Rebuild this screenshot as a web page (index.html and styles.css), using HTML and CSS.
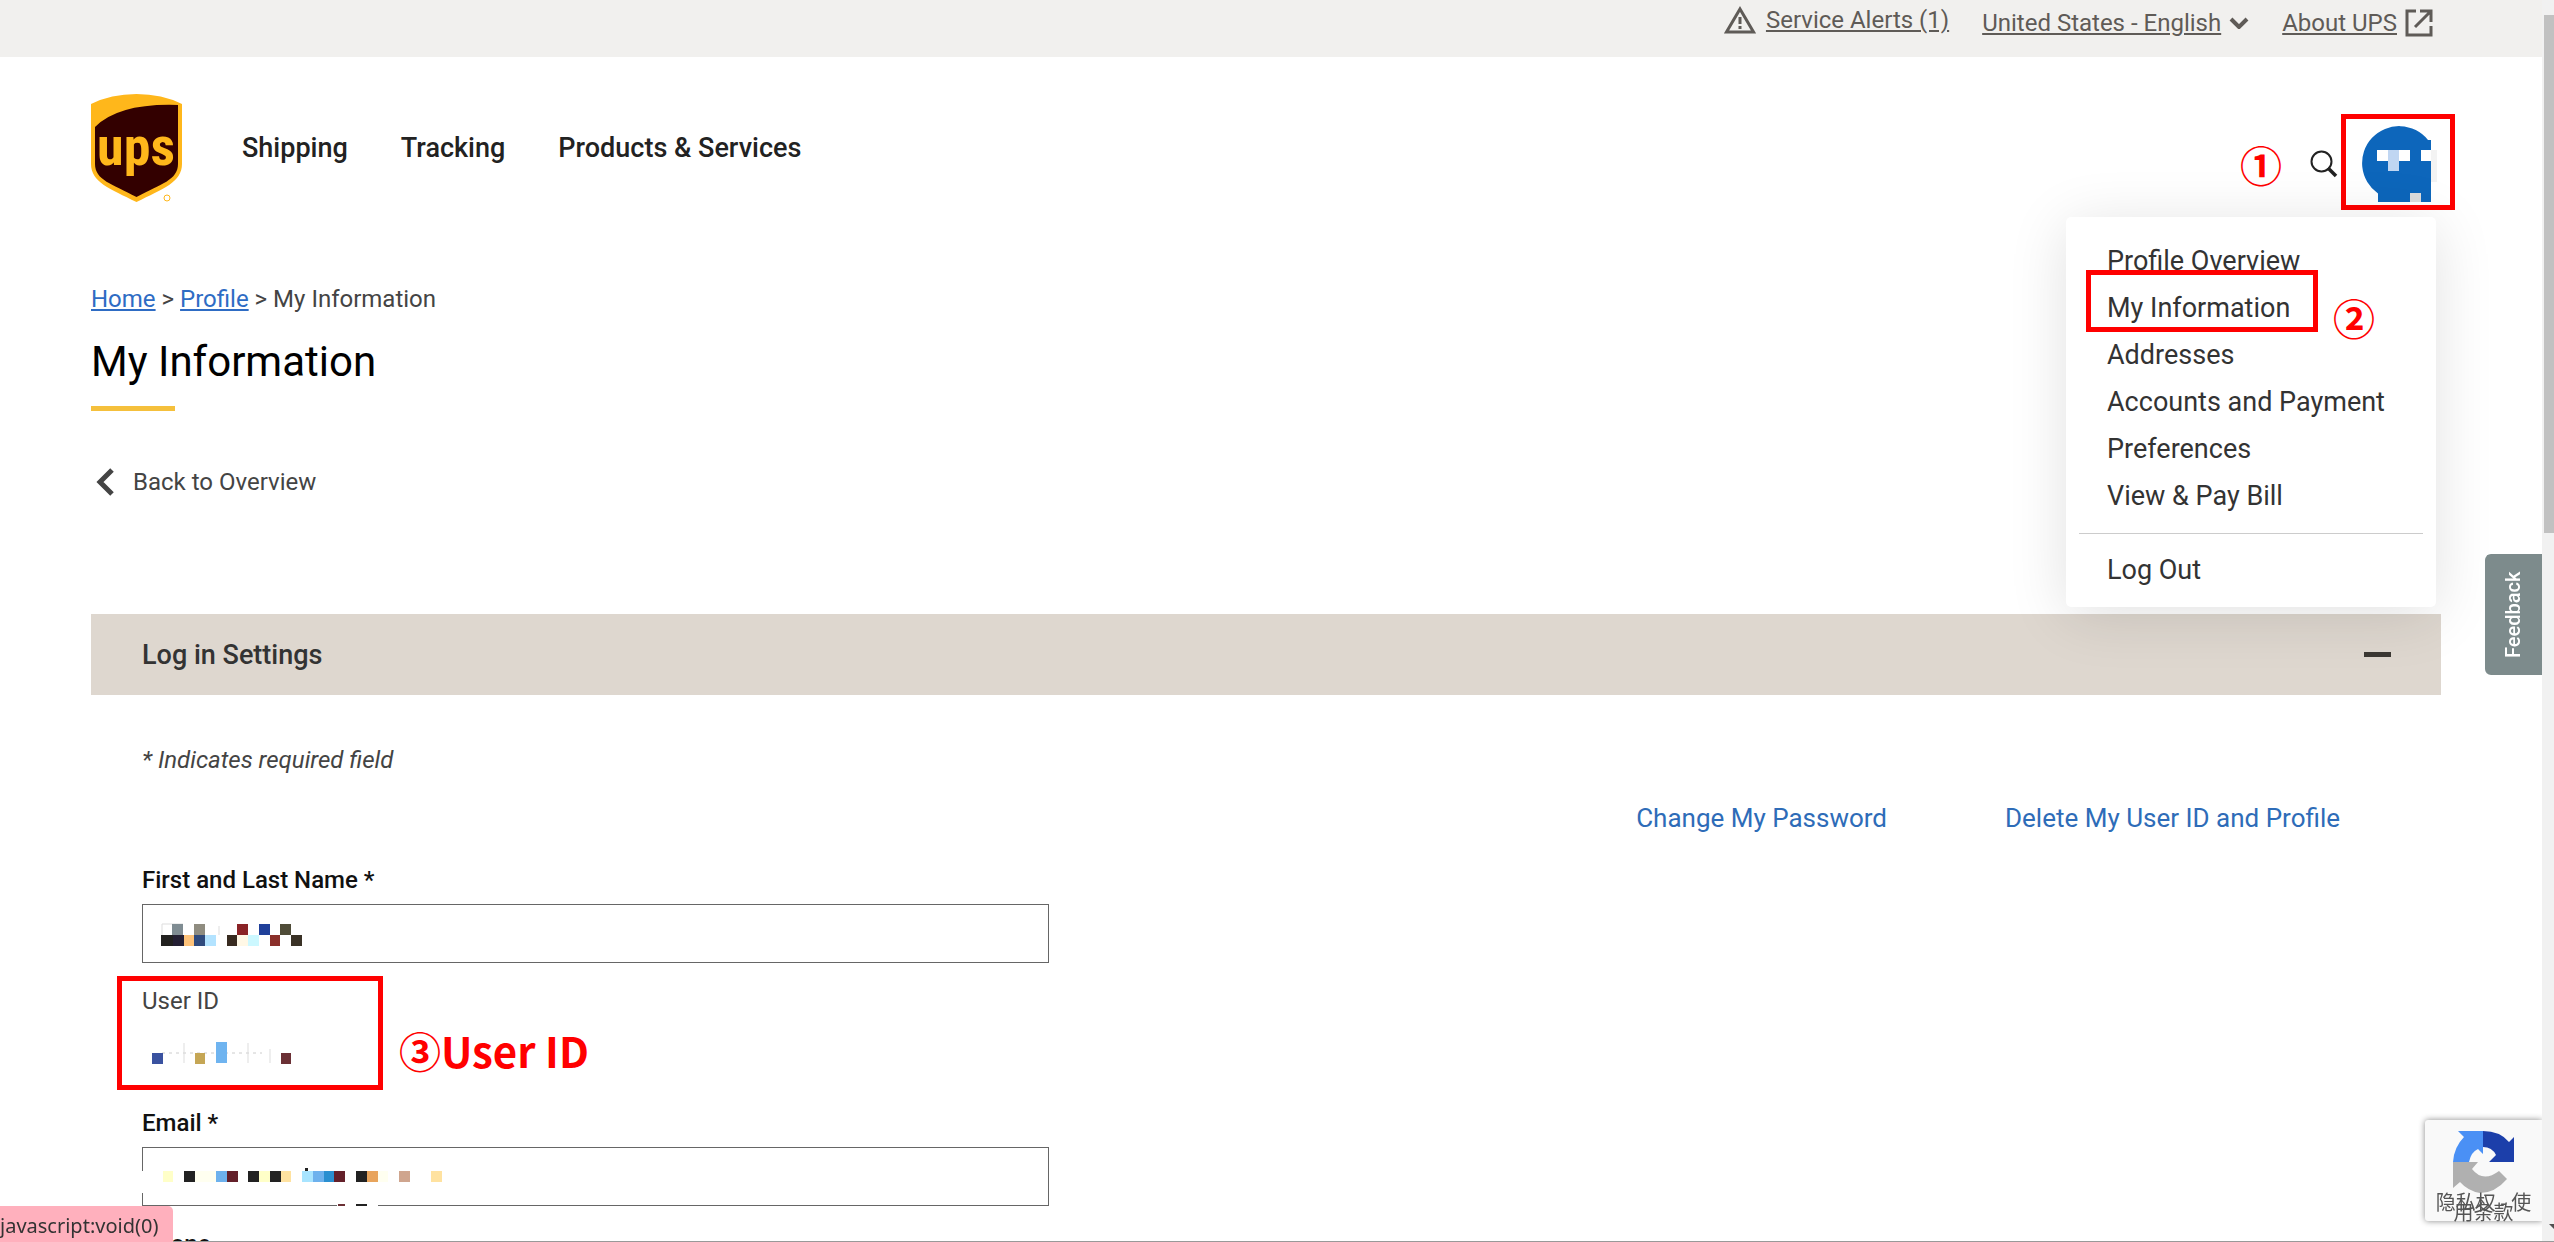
FILE: index.html
```
<!DOCTYPE html>
<html lang="en">
<head>
    <meta charset="UTF-8">
    <meta name="viewport" content="width=device-width, initial-scale=1.0">
    <title>My Information | UPS - United States</title>
    <link rel="stylesheet" href="styles.css">
</head>
<body>
    <div class="page">
        <div class="topbar">
            <a href="#" class="alerts">
                <svg width="32" height="28" viewBox="0 0 32 28"><path d="M16 3L29.500 26H2.500Z" fill="none" stroke="#5f5b57" stroke-width="3"/><path d="M16 11V18M16 20V23" stroke="#5f5b57" stroke-width="3"/></svg>
                <span>Service Alerts (1)</span>
            </a>
            <a href="#" class="country">
                <span>United States - English</span>
                <svg width="20" height="12" viewBox="0 0 20 12"><path d="M2 2L10 10L18 2" fill="none" stroke="#5f5b57" stroke-width="4"/></svg>
            </a>
            <a href="#" class="about">
                <span>About UPS</span>
                <svg width="28" height="28" viewBox="0 0 28 28"><path d="M11 2H2V26H26V17M15 2H26V13M26 2L10 18" fill="none" stroke="#5f5b57" stroke-width="3"/></svg>
            </a>
        </div>

        <header class="header">
            <a href="#" class="logo" aria-label="UPS">
                <svg width="91" height="108" viewBox="0 0 91 108">
                    <path d="M0 10Q20 0 45.500 0T91 10V70C91 88 72 95 45.500 108C19 95 0 88 0 70Z" fill="#ffb71b"/>
                    <path d="M4 33Q28 9 87 11V70C87 86 70 90 45.500 103C21 90 4 86 4 70Z" fill="#330000"/>
                    <text x="45" y="71" text-anchor="middle" class="logo-text">ups</text>
                    <circle cx="76" cy="104" r="3" fill="none" stroke="#ffb71b"/>
                </svg>
            </a>
            <nav class="nav">
                <a href="#">Shipping</a>
                <a href="#">Tracking</a>
                <a href="#">Products &amp; Services</a>
            </nav>
            <div class="tools">
                <span class="mark">①</span>
                <button class="search" aria-label="Search">
                    <svg width="28" height="28" viewBox="0 0 28 28"><circle cx="11.500" cy="11.500" r="10" fill="none" stroke="#222" stroke-width="2"/><path d="M18 18L26 26" stroke="#222" stroke-width="3.500"/></svg>
                </button>
                <button class="avatar" aria-label="Profile">
                    <svg width="75" height="76" viewBox="0 0 75 76">
                        <path d="M69 24H75V56H69Z" fill="#f3f3f3"/>
                        <path d="M69 14H66A37 37 0 1 0 16 67.500V76H69Z" fill="#0d66bb"/>
                        <path d="M15 24H26V35H15ZM37 24H48V35H37ZM59 24H69V35H59Z" fill="#fff"/>
                        <path d="M26 24H37V45H26Z" fill="#c0d6f2"/>
                        <path d="M48 67H59V76H48Z" fill="#dcdcdc"/>
                    </svg>
                    <span class="frame"></span>
                </button>
                <!-- profile menu -->
                <ul class="menu">
                    <li><a href="#">Profile Overview</a></li>
                    <li class="on"><a href="#">My Information</a><span class="frame"></span><span class="mark">②</span></li>
                    <li><a href="#">Addresses</a></li>
                    <li><a href="#">Accounts and Payment</a></li>
                    <li><a href="#">Preferences</a></li>
                    <li><a href="#">View &amp; Pay Bill</a></li>
                    <li class="logout"><a href="#">Log Out</a></li>
                </ul>
            </div>
        </header>

        <main class="content">
            <div class="breadcrumb"><a href="#">Home</a> &gt; <a href="#">Profile</a> &gt; My Information</div>
            <h1>My Information</h1>
            <a href="#" class="back">
                <svg width="28" height="28" viewBox="0 0 28 28"><path d="M21 2L9 14L21 26" fill="none" stroke="#444" stroke-width="5"/></svg>
                Back to Overview
            </a>

            <section>
                <div class="section-title">
                    <h2>Log in Settings</h2>
                    <button class="fold" aria-label="Collapse"><span></span></button>
                </div>
                <div class="section-body">
                    <p class="required">* Indicates required field</p>
                    <div class="links">
                        <a href="#">Change My Password</a>
                        <a href="#">Delete My User ID and Profile</a>
                    </div>
                    <form class="form">
                        <div class="field">
                            <label for="name">First and Last Name *</label>
                            <div class="box">
                                <input type="text" id="name">
                                <svg class="blur" width="400" height="59" viewBox="0 0 400 59">
                                    <path d="M20 31V20H41M77 31V22" fill="none" stroke="#ddd"/>
                                    <path d="M30 20h11v11h-11z" fill="#7f8c92"/><path d="M52 20h11v11h-11z" fill="#8f8c80"/>
                                    <path d="M95 20h11v11h-11z" fill="#8a2326"/><path d="M117 20h11v11h-11z" fill="#20409a"/><path d="M138 20h11v11h-11z" fill="#4f4c38"/>
                                    <path d="M19 31h12v11h-12z" fill="#22211f"/><path d="M31 31h11v11h-11z" fill="#241f33"/><path d="M42 31h10v11h-10z" fill="#fdc27a"/>
                                    <path d="M52 31h11v11h-11z" fill="#2f4a7d"/><path d="M63 31h11v11h-11z" fill="#b3e3ff"/><path d="M85 31h10v11h-10z" fill="#382b20"/>
                                    <path d="M95 31h11v11h-11z" fill="#fff8e6"/><path d="M106 31h11v11h-11z" fill="#ccf8ff"/><path d="M128 31h10v11h-10z" fill="#8a2f2a"/><path d="M149 31h11v11h-11z" fill="#3a3226"/>
                                </svg>
                            </div>
                        </div>
                        <div class="field user">
                            <span>User ID</span>
                            <svg width="160" height="24" viewBox="0 0 160 24">
                                <path d="M20 12H120" stroke="#ccc" stroke-dasharray="3 4"/><path d="M42 2V22M106 2V22M128 8V22" stroke="#ddd"/>
                                <path d="M10 12h11v11h-11z" fill="#3a52a0"/><path d="M53 12h10v11h-10z" fill="#c5a655"/><path d="M74 1h11v21h-11z" fill="#6fb4f0"/><path d="M139 12h10v11h-10z" fill="#6b3035"/>
                            </svg>
                            <span class="frame"></span>
                            <strong class="mark">③User ID</strong>
                        </div>
                        <div class="field">
                            <label for="email">Email *</label>
                            <div class="box">
                                <input type="email" id="email">
                                <svg class="blur" width="400" height="59" viewBox="0 0 400 59">
                                    <path d="M0 24h3v22h-3zM195 57h41v2h-41z" fill="#fff"/>
                                    <path d="M196 57h7v2h-7z" fill="#6b3035"/><path d="M214 57h11v2h-11z" fill="#222"/>
                                    <path d="M21 24h10v11h-10zM117 24h11v11h-11z" fill="#ffffc8"/>
                                    <path d="M42 24h11v11h-11zM106 24h11v11h-11zM128 24h11v11h-11zM214 24h11v11h-11zM163 21h3v3h-3z" fill="#222"/>
                                    <path d="M53 24h21v11h-21zM236 24h10v11h-10z" fill="#fffff0"/>
                                    <path d="M74 24h11v11h-11zM171 24h11v11h-11z" fill="#6db1ed"/>
                                    <path d="M85 24h11v11h-11zM192 24h11v11h-11z" fill="#64202a"/>
                                    <path d="M139 24h10v11h-10zM289 24h11v11h-11z" fill="#ffe2a0"/>
                                    <path d="M160 24h11v11h-11z" fill="#a8e4ff"/><path d="M182 24h10v11h-10z" fill="#2a8fd0"/>
                                    <path d="M225 24h11v11h-11z" fill="#e8a45c"/><path d="M257 24h11v11h-11z" fill="#cfa58e"/>
                                </svg>
                            </div>
                        </div>
                        <div class="field">
                            <label for="phone">Phone</label>
                            <div class="box"><input type="tel" id="phone"></div>
                        </div>
                    </form>
                </div>
            </section>
        </main>
    </div>

    <button class="feedback">Feedback</button>
    <div class="captcha">
        <svg width="62" height="62" viewBox="0 0 62 62">
            <path d="M5 0H30V23L25 18Q18 21 16 31H0Q1 16 11 6Z" fill="#4a90f5"/>
            <path d="M30 0Q47 0 56 11L61 6V31H36L43 24Q39 16 30 16Z" fill="#1c3faa"/>
            <path d="M0 31H25L19 38Q30 52 46 40L54 48Q42 62 27 62Q15 60 7 51L0 57Z" fill="#b0b0b0"/>
        </svg>
        <div>隐私权 - 使<br>用条款</div>
    </div>
    <div class="status">javascript:void(0)</div>
    <div class="scrollbar"><span></span></div>
</body>
</html>
```

FILE: styles.css
```
* { margin: 0; padding: 0; box-sizing: border-box; }
li { list-style: none; }
a { color: inherit; text-decoration: none; }
button { border: 0; background: none; font-family: inherit; }
svg { display: block; }
body, html {
    width: 100%;
    height: 100%;
    overflow: hidden;
}
body {
    font-family: Roboto, "Noto Sans CJK SC", sans-serif;
    font-size: 24px;
    line-height: 32px;
    color: #444;
    background: #fff;
    border-bottom: 1px solid #999;
}
.page {
    margin-right: 12px;
}

/* top bar */
.topbar {
    display: flex;
    justify-content: flex-end;
    align-items: flex-start;
    gap: 33px;
    height: 57px;
    padding: 7px 109px 0 91px;
    background: #f1f0ee;
    color: #5f5b57;
}
.topbar a {
    display: flex;
    align-items: center;
    gap: 8px;
}
.topbar span {
    text-decoration: underline;
}
.topbar .alerts {
    height: 26px;
    gap: 10px;
}

/* header */
.header {
    display: flex;
    align-items: center;
    height: 145px;
    padding: 37px 105px 0 91px;
}
.logo-text {
    font: bold 54px "Liberation Sans Narrow", "Roboto Condensed", Roboto, sans-serif;
    fill: #ffb71b;
}
.nav {
    display: flex;
    gap: 53px;
    margin-left: 60px;
    font-size: 27px;
    font-weight: 500;
    color: #222;
}
.tools {
    position: relative;
    display: flex;
    align-items: center;
    align-self: flex-end;
    margin-left: auto;
}
.search {
    margin: 0 24px 0 28px;
}
.avatar {
    position: relative;
}
.frame {
    position: absolute;
    border: 5px solid #f00;
}
.avatar .frame {
    left: -21px;
    top: -12px;
    width: 114px;
    height: 96px;
}
.mark {
    font-family: "Noto Sans CJK SC", sans-serif;
    font-size: 42px;
    font-weight: bold;
    color: #f00;
}
.menu {
    position: absolute;
    top: 91px;
    right: 1px;
    width: 370px;
    padding: 21px 13px 13px;
    border-radius: 5px;
    background: #fff;
    box-shadow: 0 8px 60px rgba(0, 0, 0, 0.12);
    font-size: 27px;
    line-height: 47px;
    color: #333;
}
.menu a {
    display: block;
    padding-left: 28px;
}
.menu .on {
    position: relative;
}
.menu .frame {
    left: 7px;
    top: -15px;
    width: 232px;
    height: 62px;
}
.menu .mark {
    position: absolute;
    left: 254px;
    top: 8px;
}
.menu .logout {
    margin-top: 13px;
    padding-top: 13px;
    border-top: 1px solid #ccc;
}

/* content */
.content {
    padding: 81px 101px 0 91px;
}
.breadcrumb a {
    color: #2e6cc4;
    text-decoration: underline;
}
h1 {
    margin-top: 21px;
    font-size: 42px;
    font-weight: normal;
    line-height: 52px;
    color: #000;
}
h1::after {
    content: "";
    display: block;
    width: 84px;
    height: 5px;
    margin-top: 18px;
    background: #f5c03c;
}
.back {
    display: flex;
    align-items: center;
    gap: 14px;
    margin: 55px 0 116px;
}
.section-title {
    display: flex;
    align-items: center;
    justify-content: space-between;
    height: 81px;
    padding: 0 50px 0 51px;
    background: #ded7cf;
}
h2 {
    font-size: 27px;
    font-weight: 500;
    color: #333;
}
.fold span {
    display: block;
    width: 27px;
    height: 5px;
    background: #3b3833;
}
.section-body {
    padding: 49px 101px 0 51px;
}
.required {
    font-style: italic;
}
.links {
    display: flex;
    justify-content: flex-end;
    gap: 118px;
    margin: 26px 0 30px;
    font-size: 26px;
    color: #2e6cb8;
}
.form {
    display: flex;
    flex-direction: column;
    gap: 22px;
    width: 907px;
    max-width: 100%;
}
label {
    display: block;
    margin-bottom: 8px;
    font-weight: 500;
    color: #111;
}
.box {
    position: relative;
}
.box input {
    display: block;
    width: 100%;
    height: 59px;
    padding: 0 18px;
    border: 1px solid #666;
    font-size: 24px;
}
/* blurred personal data over the input */
.blur {
    position: absolute;
    left: 0;
    top: 0;
}
.user {
    position: relative;
    height: 100px;
}
.user svg {
    margin-top: 24px;
}
.user .frame {
    left: -25px;
    top: -9px;
    width: 266px;
    height: 114px;
}
.user .mark {
    position: absolute;
    left: 257px;
    top: 49px;
}

/* fixed parts */
.feedback {
    position: fixed;
    right: 12px;
    top: 554px;
    width: 57px;
    height: 121px;
    border-radius: 0 6px 6px 0;
    background: #7d8b8c;
    color: #fff;
    font-size: 20px;
    font-weight: 500;
    writing-mode: vertical-rl;
    transform: rotate(180deg);
}
.captcha {
    position: fixed;
    right: 12px;
    bottom: 21px;
    width: 117px;
    height: 101px;
    padding-top: 11px;
    border-radius: 3px 0 0 3px;
    background: #f9f9f9;
    box-shadow: 0 0 6px #888;
    font-size: 20px;
    line-height: 10px;
    text-align: center;
    color: #555;
}
.captcha svg {
    margin: 0 auto 5px 28px;
}
.status {
    position: fixed;
    left: 0;
    bottom: 0;
    height: 36px;
    padding-right: 15px;
    border-top-right-radius: 5px;
    background: #ffb0bd;
    color: #333;
    font-family: "Noto Sans", sans-serif;
    font-size: 20px;
    line-height: 40px;
}
.scrollbar {
    position: fixed;
    right: 0;
    top: 0;
    bottom: 1px;
    width: 12px;
    padding: 15px 0 0 2px;
    background: #f1f1f1;
}
.scrollbar span {
    display: block;
    height: 518px;
    background: #c1c1c1;
}
.scrollbar::after {
    content: "";
    position: absolute;
    left: 7px;
    bottom: 12px;
    border: 5px solid transparent;
    border-top-color: #505050;
    border-bottom: 0;
}
```
